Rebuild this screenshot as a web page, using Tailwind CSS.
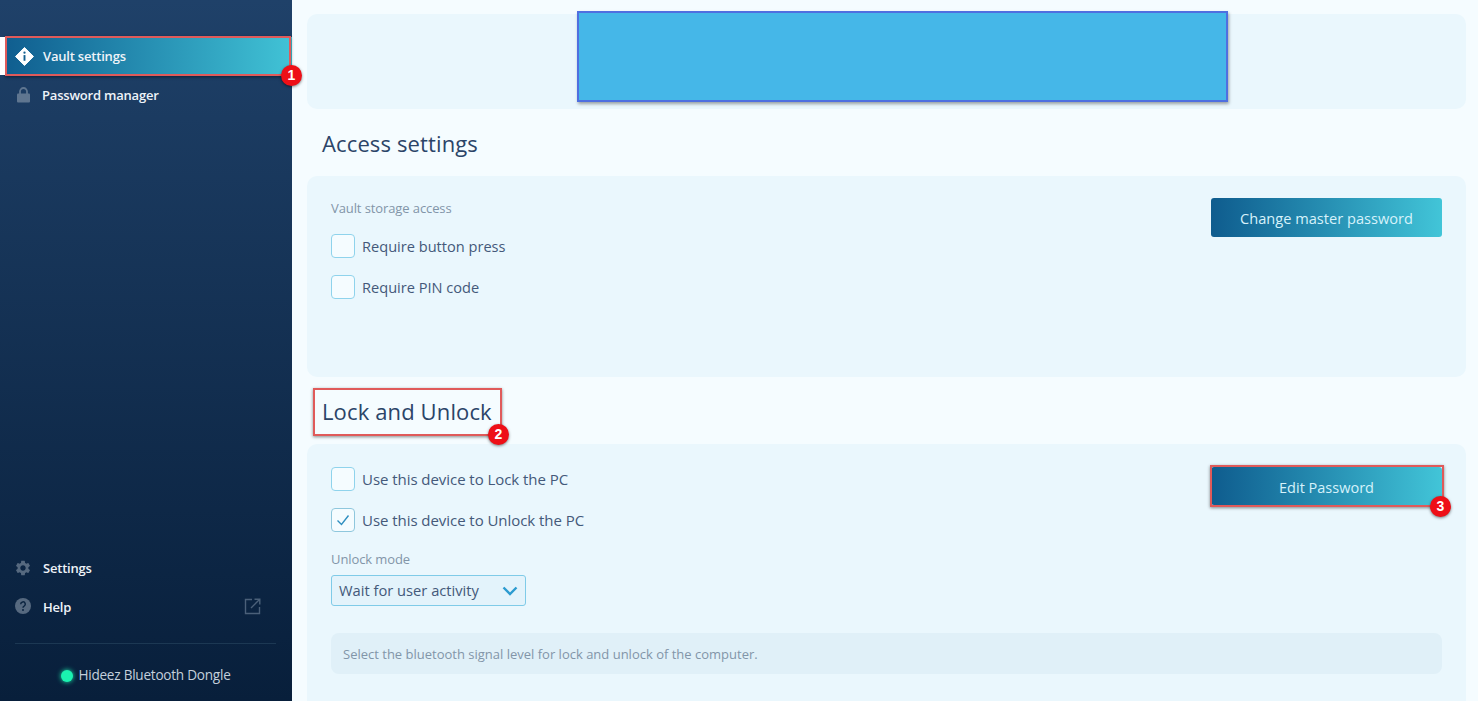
<!DOCTYPE html>
<html>
<head>
<meta charset="utf-8">
<script src="https://cdn.jsdelivr.net/npm/@tailwindcss/browser@4"></script>
</head>
<body class="m-0 overflow-hidden bg-[#f5fcff] font-['Open_Sans','Noto_Sans',sans-serif]">
<div class="relative flex h-[701px] w-[1478px] overflow-hidden">
  <aside class="flex h-full w-[292px] shrink-0 flex-col bg-gradient-to-b from-[#1f4169] to-[#081f3b] text-[13px] font-semibold text-[#eef3f8]">
    <nav class="flex flex-col pt-[37px]">
      <div class="flex h-[38px] items-center bg-gradient-to-r from-[#0f5c8e] to-[#41c3d6] pl-[15px]">
        <svg class="h-[19px] w-[19px]" viewBox="0 0 20 20"><path d="M10 0.5 19.5 10 10 19.5 0.5 10Z" fill="#fff" stroke="#fff" stroke-linejoin="round" stroke-width="1"/><rect x="9" y="8.5" width="2" height="6" fill="#15608f"/><circle cx="10" cy="6" r="1.2" fill="#15608f"/></svg>
        <span class="ml-[9px] pt-[2px] tracking-[-0.2px]">Vault settings</span>
      </div>
      <div class="flex h-[39px] items-center pl-[16px]">
        <svg class="h-[16px] w-[15px]" viewBox="0 0 15 16"><path d="M4 7V4.5a3.5 3.5 0 0 1 7 0V7" fill="none" stroke="#5f7690" stroke-width="1.8"/><rect x="1" y="6.5" width="13" height="9" rx="1" fill="#5f7690"/></svg>
        <span class="ml-[11px] pt-[2px] tracking-[-0.2px]">Password manager</span>
      </div>
    </nav>
    <div class="mb-[4px] mt-auto flex flex-col px-[15px]">
      <div class="flex h-[39px] items-center">
        <svg class="-ml-[1px] -mt-[2px] h-[18px] w-[18px]" viewBox="0 0 24 24" fill="#56697f"><path d="M19.14 12.94c.04-.3.06-.61.06-.94 0-.32-.02-.64-.07-.94l2.03-1.58a.49.49 0 0 0 .12-.61l-1.92-3.32a.488.488 0 0 0-.59-.22l-2.39.96c-.5-.38-1.03-.7-1.62-.94l-.36-2.54a.484.484 0 0 0-.48-.41h-3.84c-.24 0-.43.17-.47.41l-.36 2.54c-.59.24-1.13.57-1.62.94l-2.39-.96c-.22-.08-.47 0-.59.22L2.74 8.87c-.12.21-.08.47.12.61l2.03 1.58c-.05.3-.09.63-.09.94s.02.64.07.94l-2.03 1.58a.49.49 0 0 0-.12.61l1.92 3.32c.12.22.37.29.59.22l2.39-.96c.5.38 1.03.7 1.62.94l.36 2.54c.05.24.24.41.48.41h3.84c.24 0 .44-.17.47-.41l.36-2.54c.59-.24 1.13-.56 1.62-.94l2.39.96c.22.08.47 0 .59-.22l1.92-3.32c.12-.22.07-.47-.12-.61l-2.01-1.58zM12 15.6c-1.98 0-3.6-1.62-3.6-3.6s1.62-3.6 3.6-3.6 3.6 1.62 3.6 3.6-1.62 3.6-3.6 3.6z"/></svg>
        <span class="ml-[11px] tracking-[-0.2px]">Settings</span>
      </div>
      <div class="flex h-[38px] items-center">
        <svg class="-mt-[2px] h-[16px] w-[16px]" viewBox="0 0 16 16"><circle cx="8" cy="8" r="8" fill="#56697f"/><path d="M5.7 6.2a2.3 2.3 0 1 1 3.4 2c-.8.4-1.1.8-1.1 1.6" fill="none" stroke="#0b2440" stroke-width="1.5"/><circle cx="8" cy="12" r="1" fill="#0b2440"/></svg>
        <span class="ml-[12px] pt-[2px] tracking-[-0.2px]">Help</span>
        <svg class="-mt-[2px] ml-auto mr-[16px] h-[17px] w-[17px]" viewBox="0 0 17 17" fill="none" stroke="#4b6079" stroke-width="1.4"><path d="M8 1.5H1.5v14h14V9"/><path d="M7 10 15.5 1.5M10.5 1.2h5.3v5.3"/></svg>
      </div>
      <div class="mt-[17px] h-px w-[261px] bg-[#1c3853]"></div>
    </div>
    <div class="flex h-[53px] items-center justify-center pt-[2px] text-[13.6px] font-normal tracking-[-0.25px] text-[#c3cfdb]">
      <span class="mr-[5px] h-[12px] w-[12px] rounded-full bg-[#1bf2b0] shadow-[0_0_5px_#1bf2b0]"></span>
      <span>Hideez Bluetooth Dongle</span>
    </div>
  </aside>

  <main class="flex min-w-0 flex-1 flex-col pl-[15px] pr-[12px] pt-[14px] text-[#44597a]">
    <section class="h-[95px] shrink-0 rounded-[10px] bg-[#eaf7fd]"></section>

    <h2 class="flex h-[67px] shrink-0 items-center pl-[15px] pt-[2px] text-[22px] font-normal tracking-[0.13px] text-[#2b4468]">Access settings</h2>

    <section class="flex h-[201px] shrink-0 justify-between rounded-[10px] bg-[#eaf7fd] pl-[24px] pr-[24px] pt-[22px]">
      <div class="flex flex-col">
        <div class="text-[13px] leading-[20px] tracking-[-0.1px] text-[#8295a8]">Vault storage access</div>
        <label class="mt-[16px] flex h-[24px] items-center text-[14.6px]">
          <span class="h-[24px] w-[24px] rounded-[4px] border border-[#8fd3ec] bg-[#f5fcff]"></span>
          <span class="ml-[7px] pt-[2px]">Require button press</span>
        </label>
        <label class="mt-[17px] flex h-[24px] items-center text-[14.6px]">
          <span class="h-[24px] w-[24px] rounded-[4px] border border-[#8fd3ec] bg-[#f5fcff]"></span>
          <span class="ml-[7px] pt-[2px]">Require PIN code</span>
        </label>
      </div>
      <button class="h-[39px] w-[231px] rounded-[3px] bg-gradient-to-r from-[#0f5c8e] to-[#42c5d8] pt-[2px] text-[14.6px] text-[#d6f2fb]">Change master password</button>
    </section>

    <h2 class="flex h-[67px] shrink-0 items-center pl-[15px] pt-[2px] text-[22px] font-normal tracking-[0.13px] text-[#2b4468]">Lock and Unlock</h2>

    <section class="relative flex-1 rounded-t-[10px] bg-[#eaf7fd] pl-[24px] pr-[24px] pt-[23px]">
      <div class="flex justify-between">
        <div class="flex flex-col">
          <label class="flex h-[24px] items-center text-[15px] tracking-[-0.05px]">
            <span class="h-[24px] w-[24px] rounded-[4px] border border-[#8fd3ec] bg-[#f5fcff]"></span>
            <span class="ml-[7px]">Use this device to Lock the PC</span>
          </label>
          <label class="mt-[17px] flex h-[24px] items-center text-[15px] tracking-[-0.05px]">
            <span class="flex h-[24px] w-[24px] items-center justify-center rounded-[4px] border border-[#8fc7dd] bg-[#f5fcff]">
              <svg class="h-[14px] w-[14px]" viewBox="0 0 14 14" fill="none" stroke="#2f8fc0" stroke-width="1.4"><path d="M1.5 7.5 5.5 11.5 12.5 2.5"/></svg>
            </span>
            <span class="ml-[7px]">Use this device to Unlock the PC</span>
          </label>
          <div class="mt-[17px] text-[13px] leading-[20px] tracking-[-0.1px] text-[#8295a8]">Unlock mode</div>
          <div class="mt-[6px] flex h-[31px] w-[195px] items-center justify-between rounded-[3px] border border-[#7fcbe8] bg-[#e3f3fb] pl-[7px] pr-[7px] text-[14.7px]">
            <span>Wait for user activity</span>
            <svg class="h-[10px] w-[16px]" viewBox="0 0 16 10" fill="none" stroke="#2c9bd0" stroke-width="2.4"><path d="M1.5 1.5 8 8l6.5-6.5"/></svg>
          </div>
        </div>
        <button class="h-[38px] w-[231px] rounded-[3px] bg-gradient-to-r from-[#0f5c8e] to-[#42c5d8] pt-[4px] text-[14.5px] text-[#d6f2fb]">Edit Password</button>
      </div>
      <div class="mt-[27px] flex h-[41px] items-center rounded-[8px] bg-[#e0f0f8] pl-[12px] pt-[2px] text-[13px] text-[#8295a8]">Select the bluetooth signal level for lock and unlock of the computer.</div>
    </section>
  </main>

  <!-- screenshot annotations lying over the interface -->
  <div class="absolute left-[577px] top-[11px] h-[91px] w-[651px] border-2 border-[#4f6fe0] bg-[#45b7e8] shadow-[1px_2px_3px_rgba(0,0,0,0.35)]"></div>

  <div class="absolute left-[5px] top-[36px] h-[40px] w-[286px] border-2 border-[#e05a5a] shadow-[0_1px_3px_rgba(0,0,0,0.45)]"></div>
  <div class="absolute left-0 top-[37px] h-[38px] w-[5px] bg-white"></div>
  <div class="absolute left-[281px] top-[65px] flex h-[21px] w-[21px] items-center justify-center rounded-full bg-[#ee0f17] font-['Liberation_Sans',sans-serif] text-[14px] font-bold text-white shadow-[0_1px_3px_rgba(0,0,0,0.5)]">1</div>

  <div class="absolute left-[313px] top-[388px] h-[48px] w-[189px] border-2 border-[#e05a5a] shadow-[0_1px_3px_rgba(0,0,0,0.45)]"></div>
  <div class="absolute left-[488px] top-[424px] flex h-[21px] w-[21px] items-center justify-center rounded-full bg-[#ee0f17] font-['Liberation_Sans',sans-serif] text-[14px] font-bold text-white shadow-[0_1px_3px_rgba(0,0,0,0.5)]">2</div>

  <div class="absolute left-[1210px] top-[465px] h-[42px] w-[234px] border-2 border-[#e05a5a] shadow-[0_1px_3px_rgba(0,0,0,0.45)]"></div>
  <div class="absolute left-[1430px] top-[496px] flex h-[21px] w-[21px] items-center justify-center rounded-full bg-[#ee0f17] font-['Liberation_Sans',sans-serif] text-[14px] font-bold text-white shadow-[0_1px_3px_rgba(0,0,0,0.5)]">3</div>
</div>
</body>
</html>
